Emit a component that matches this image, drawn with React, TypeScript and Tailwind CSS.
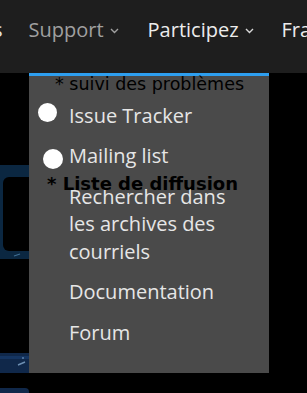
import React from "react";

function Chevron({ color }: { color: string }) {
  return (
    <svg width="9" height="6" viewBox="0 0 9 6" className="ml-[6px] mt-[12px] shrink-0">
      <path d="M1 1 L4.5 4.5 L8 1" fill="none" stroke={color} strokeWidth="1.4" />
    </svg>
  );
}

function LeftDeco() {
  return (
    <svg width="29" height="320" viewBox="0 0 29 320" className="block">
      <rect x="0" y="0" width="29" height="320" fill="#000" />
      <rect x="-10" y="92" width="39" height="94" fill="#0b2741" />
      <rect x="3" y="104" width="40" height="74" rx="6" fill="#000" />
      <path d="M14 183 L20 181" stroke="#3f6e93" strokeWidth="1.2" />
      <rect x="-10" y="280" width="39" height="20" fill="#10284a" />
      <rect x="0" y="283" width="29" height="3" fill="#153561" />
      <path d="M18 292 L25 289" stroke="#6d8fb3" strokeWidth="1.4" />
      <circle cx="23" cy="285" r="1" fill="#5a7fa8" />
      <rect x="-10" y="315" width="39" height="10" rx="4" fill="#10284a" />
    </svg>
  );
}

export default function App() {
  return (
    <div className="w-[307px] h-[393px] bg-black overflow-hidden font-['Open_Sans',sans-serif]">
      <nav className="h-[73px] bg-[#1e1e1e] flex items-start pt-[16px] text-[20px] leading-[28px] whitespace-nowrap overflow-hidden">
        <span className="ml-[-7px] text-[#e8e8e8]">s</span>
        <div className="ml-[26px] flex items-start">
          <span className="text-[#a0a0a0]">Support</span>
          <Chevron color="#a0a0a0" />
        </div>
        <div className="ml-[29px] flex items-start">
          <span className="text-[#ececec]">Participez</span>
          <Chevron color="#d8d8d8" />
        </div>
        <span className="ml-[28px] text-[#ececec]">Français</span>
      </nav>
      <div className="flex">
        <LeftDeco />
        <div className="relative w-[240px] h-[300px] border-t-[3px] border-[#2e9ff0] bg-[#4a4a4a]">
          <ul className="pt-[19px] pl-[40px] pr-[20px] text-[20px] leading-[27.5px] text-[#e6e6e6]">
            <li className="py-[6.5px]">Issue Tracker</li>
            <li className="py-[6.5px]">Mailing list</li>
            <li className="py-[6.5px]">Rechercher dans les archives des courriels</li>
            <li className="py-[6.5px]">Documentation</li>
            <li className="py-[6.5px]">Forum</li>
          </ul>
          <span className="absolute left-[26px] top-[-2px] text-[17.5px] leading-[20px] text-black font-['DejaVu_Sans',sans-serif] whitespace-nowrap">
            * suivi des problèmes
          </span>
          <span className="absolute left-[9px] top-[27px] w-[19px] h-[19px] rounded-full bg-white" />
          <span className="absolute left-[14px] top-[73px] w-[20px] h-[20px] rounded-full bg-white" />
          <span className="absolute left-[18px] top-[98px] text-[18px] leading-[20px] font-bold text-black font-['DejaVu_Sans',sans-serif] whitespace-nowrap">
            * Liste de diffusion
          </span>
        </div>
      </div>
    </div>
  );
}
